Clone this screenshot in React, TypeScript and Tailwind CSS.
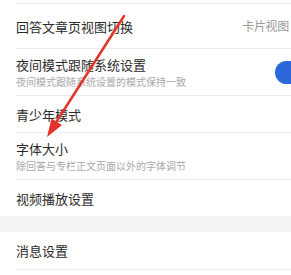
import React from 'react';

const font = { fontFamily: '"Noto Sans CJK SC", "Noto Sans", sans-serif' };

const Divider = () => <div className="ml-4 h-px bg-[#ededed]" />;

const Row: React.FC<{ title: string; sub?: string; right?: React.ReactNode; h: string }> = ({ title, sub, right, h }) => (
  <div className={`flex items-center pl-4 ${h}`}>
    <div className="flex flex-1 flex-col justify-center">
      <div className="text-[13px] leading-[17px] text-[#2b2b2b]">{title}</div>
      {sub && <div className="mt-[2px] text-[10px] leading-[14px] text-[#a8a8a8]">{sub}</div>}
    </div>
    {right}
  </div>
);

export default function App() {
  return (
    <div className="relative h-[275px] w-[291px] overflow-hidden bg-white" style={font}>
      <div className="h-[3px]" />
      <Divider />
      <Row
        h="h-[44px]"
        title="回答文章页视图切换"
        right={<span className="mr-[2px] text-[12px] tracking-[-0.3px] text-[#9a9a9a]">卡片视图</span>}
      />
      <Divider />
      <Row
        h="h-[46px]"
        title="夜间模式跟随系统设置"
        sub="夜间模式跟随系统设置的模式保持一致"
        right={<div className="mr-[-31px] h-[23px] w-[47px] rounded-full bg-[#2d68db]" />}
      />
      <Divider />
      <Row h="h-[36px]" title="青少年模式" />
      <Divider />
      <Row h="h-[46px]" title="字体大小" sub="除回答与专栏正文页面以外的字体调节" />
      <Divider />
      <Row h="h-[36px]" title="视频播放设置" />
      <div className="h-[16px] bg-[#f3f3f3]" />
      <Row h="h-[37px]" title="消息设置" />
      <Divider />

      <svg className="pointer-events-none absolute left-0 top-0" width="291" height="275" viewBox="0 0 291 275">
        <line x1="124" y1="16" x2="55" y2="124" stroke="#e4342a" strokeWidth="2.5" strokeLinecap="round" />
        <polygon points="47,137 62,125 51.5,118.5" fill="#e4342a" />
      </svg>
    </div>
  );
}
